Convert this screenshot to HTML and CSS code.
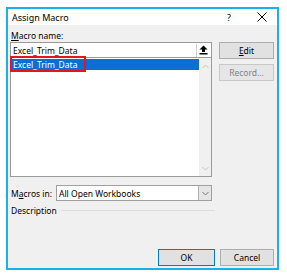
FILE: index.html
```html
<!DOCTYPE html>
<html lang="en">
<head>
    <meta charset="UTF-8">
    <title>Assign Macro</title>
    <link rel="stylesheet" href="styles.css">
</head>
<body>
    <div class="dialog">
        <div class="titlebar">
            <span class="title">Assign Macro</span>
            <span class="help">?</span>
            <span class="close">
                <svg width="10" height="10" viewBox="0 0 10 10"><path d="M0.5 0.5 L9.5 9.5 M9.5 0.5 L0.5 9.5" stroke="#000" stroke-width="1"/></svg>
            </span>
        </div>
        <div class="content">
            <div class="top">
                <div class="left">
                    <div class="label"><u>M</u>acro name:</div>
                    <div class="name-input">
                        <span class="name-text">Excel_Trim_Data</span>
                        <span class="up-btn">
                            <svg width="9" height="10" viewBox="0 0 9 10">
                                <path d="M4.5 0.5 L8.5 4.5 L6 4.5 L6 7 L3 7 L3 4.5 L0.5 4.5 Z" fill="#000"/>
                                <rect x="0.5" y="8" width="8" height="1.5" fill="#000"/>
                            </svg>
                        </span>
                    </div>
                    <div class="list">
                        <div class="items">
                            <div class="item selected">Excel_Trim_Data</div>
                        </div>
                        <div class="scrollbar">
                            <svg width="7" height="5" viewBox="0 0 7 5"><path d="M0.5 4 L3.5 1 L6.5 4" fill="none" stroke="#c4c4c4" stroke-width="1"/></svg>
                            <svg width="7" height="5" viewBox="0 0 7 5"><path d="M0.5 1 L3.5 4 L6.5 1" fill="none" stroke="#c4c4c4" stroke-width="1"/></svg>
                        </div>
                        <div class="highlight"></div>
                    </div>
                </div>
                <div class="right">
                    <div class="btn"><u>E</u>dit</div>
                    <div class="btn disabled">Record...</div>
                </div>
            </div>
            <div class="macros-row">
                <span class="row-label">M<u>a</u>cros in:</span>
                <div class="select">
                    <span class="select-text">All Open Workbooks</span>
                    <span class="select-arrow">
                        <svg width="7" height="5" viewBox="0 0 7 5"><path d="M0.5 1 L3.5 4 L6.5 1" fill="none" stroke="#777" stroke-width="1"/></svg>
                    </span>
                </div>
            </div>
            <div class="desc-row">
                <span class="row-label">Description</span>
                <span class="rule"></span>
            </div>
            <div class="footer">
                <div class="btn ok">OK</div>
                <div class="btn cancel">Cancel</div>
            </div>
        </div>
    </div>
</body>
</html>
```

FILE: styles.css
```css
body {
    margin: 0;
    background: #fff;
    font-family: 'Noto Sans', 'Open Sans', sans-serif;
    font-size: 8.5px;
    color: #000;
}

u {
    text-decoration: underline;
    text-underline-offset: 1px;
}

/* Ventana */
.dialog {
    margin: 7px 0 0 6px;
    width: 273px;
    height: 263px;
    box-sizing: border-box;
    border: 2px solid #17b1ec;
    background: #f0f0f0;
    display: flex;
    flex-direction: column;
}

.titlebar {
    height: 16px;
    background: #fff;
    display: flex;
    align-items: center;
    padding-left: 4px;
    font-size: 9px;
}

.title {
    flex: 1;
}

.help {
    width: 20px;
    text-align: center;
    margin-right: 13px;
}

.close {
    width: 20px;
    margin-right: 5px;
    display: flex;
    justify-content: center;
}

.content {
    flex: 1;
    padding: 0 3px 2px 2px;
    display: flex;
    flex-direction: column;
}

.top {
    display: flex;
    gap: 7px;
}

.left {
    width: 202px;
}

.label {
    height: 17px;
    padding-left: 1px;
    padding-top: 5px;
    box-sizing: border-box;
    line-height: 11px;
}

/* Campo del nombre */
.name-input {
    height: 15px;
    box-sizing: border-box;
    border: 1px solid #9a9a9a;
    border-bottom: none;
    background: #fff;
    display: flex;
    align-items: center;
    justify-content: space-between;
    padding-left: 2px;
}

.up-btn {
    width: 13px;
    height: 13px;
    margin-right: 1px;
    display: flex;
    align-items: center;
    justify-content: center;
    border-left: 1px solid #d0d0d0;
}

.list {
    position: relative;
    height: 120px;
    box-sizing: border-box;
    border: 1px solid #9a9a9a;
    background: #fff;
    display: flex;
}

.items {
    flex: 1;
    padding-top: 1px;
}

.item {
    height: 11px;
    line-height: 11px;
    padding-left: 2px;
}

.item.selected {
    background: #0a6fd0;
    color: #fff;
}

.scrollbar {
    width: 12px;
    background: #f0f0f0;
    display: flex;
    flex-direction: column;
    justify-content: space-between;
    align-items: center;
    padding: 6px 0 5px;
}

.highlight {
    position: absolute;
    left: -1px;
    top: -2px;
    width: 76px;
    height: 16px;
    box-sizing: border-box;
    border: 2px solid #e3161b;
}

/* Botones */
.right {
    width: 55px;
    padding-top: 17px;
    display: flex;
    flex-direction: column;
    gap: 5px;
}

.btn {
    height: 17px;
    box-sizing: border-box;
    border: 1px solid #adadad;
    background: #e1e1e1;
    display: flex;
    align-items: center;
    justify-content: center;
}

.btn.disabled {
    color: #838383;
    border-color: #c8c8c8;
    background: #e6e6e6;
}

.macros-row {
    margin-top: 8px;
    display: flex;
    align-items: center;
    padding-left: 1px;
}

.row-label {
    width: 45px;
}

.select {
    width: 156px;
    height: 16px;
    box-sizing: border-box;
    border: 1px solid #a0a0a0;
    background: #fff;
    display: flex;
    align-items: center;
    justify-content: space-between;
    padding-left: 2px;
}

.select-arrow {
    width: 12px;
    height: 14px;
    background: #e5e5e5;
    border-left: 1px solid #b0b0b0;
    display: flex;
    align-items: center;
    justify-content: center;
}

.desc-row {
    margin-top: 3px;
    height: 12px;
    display: flex;
    align-items: center;
    padding-left: 1px;
}

.desc-row .row-label {
    width: auto;
    margin-right: 4px;
}

.rule {
    width: 154px;
    border-top: 1px solid #dcdcdc;
}

.footer {
    margin-top: auto;
    display: flex;
    justify-content: flex-end;
    gap: 5px;
}

.btn.ok {
    width: 57px;
    border: 1px solid #0078d7;
}

.btn.cancel {
    width: 54px;
}
```
